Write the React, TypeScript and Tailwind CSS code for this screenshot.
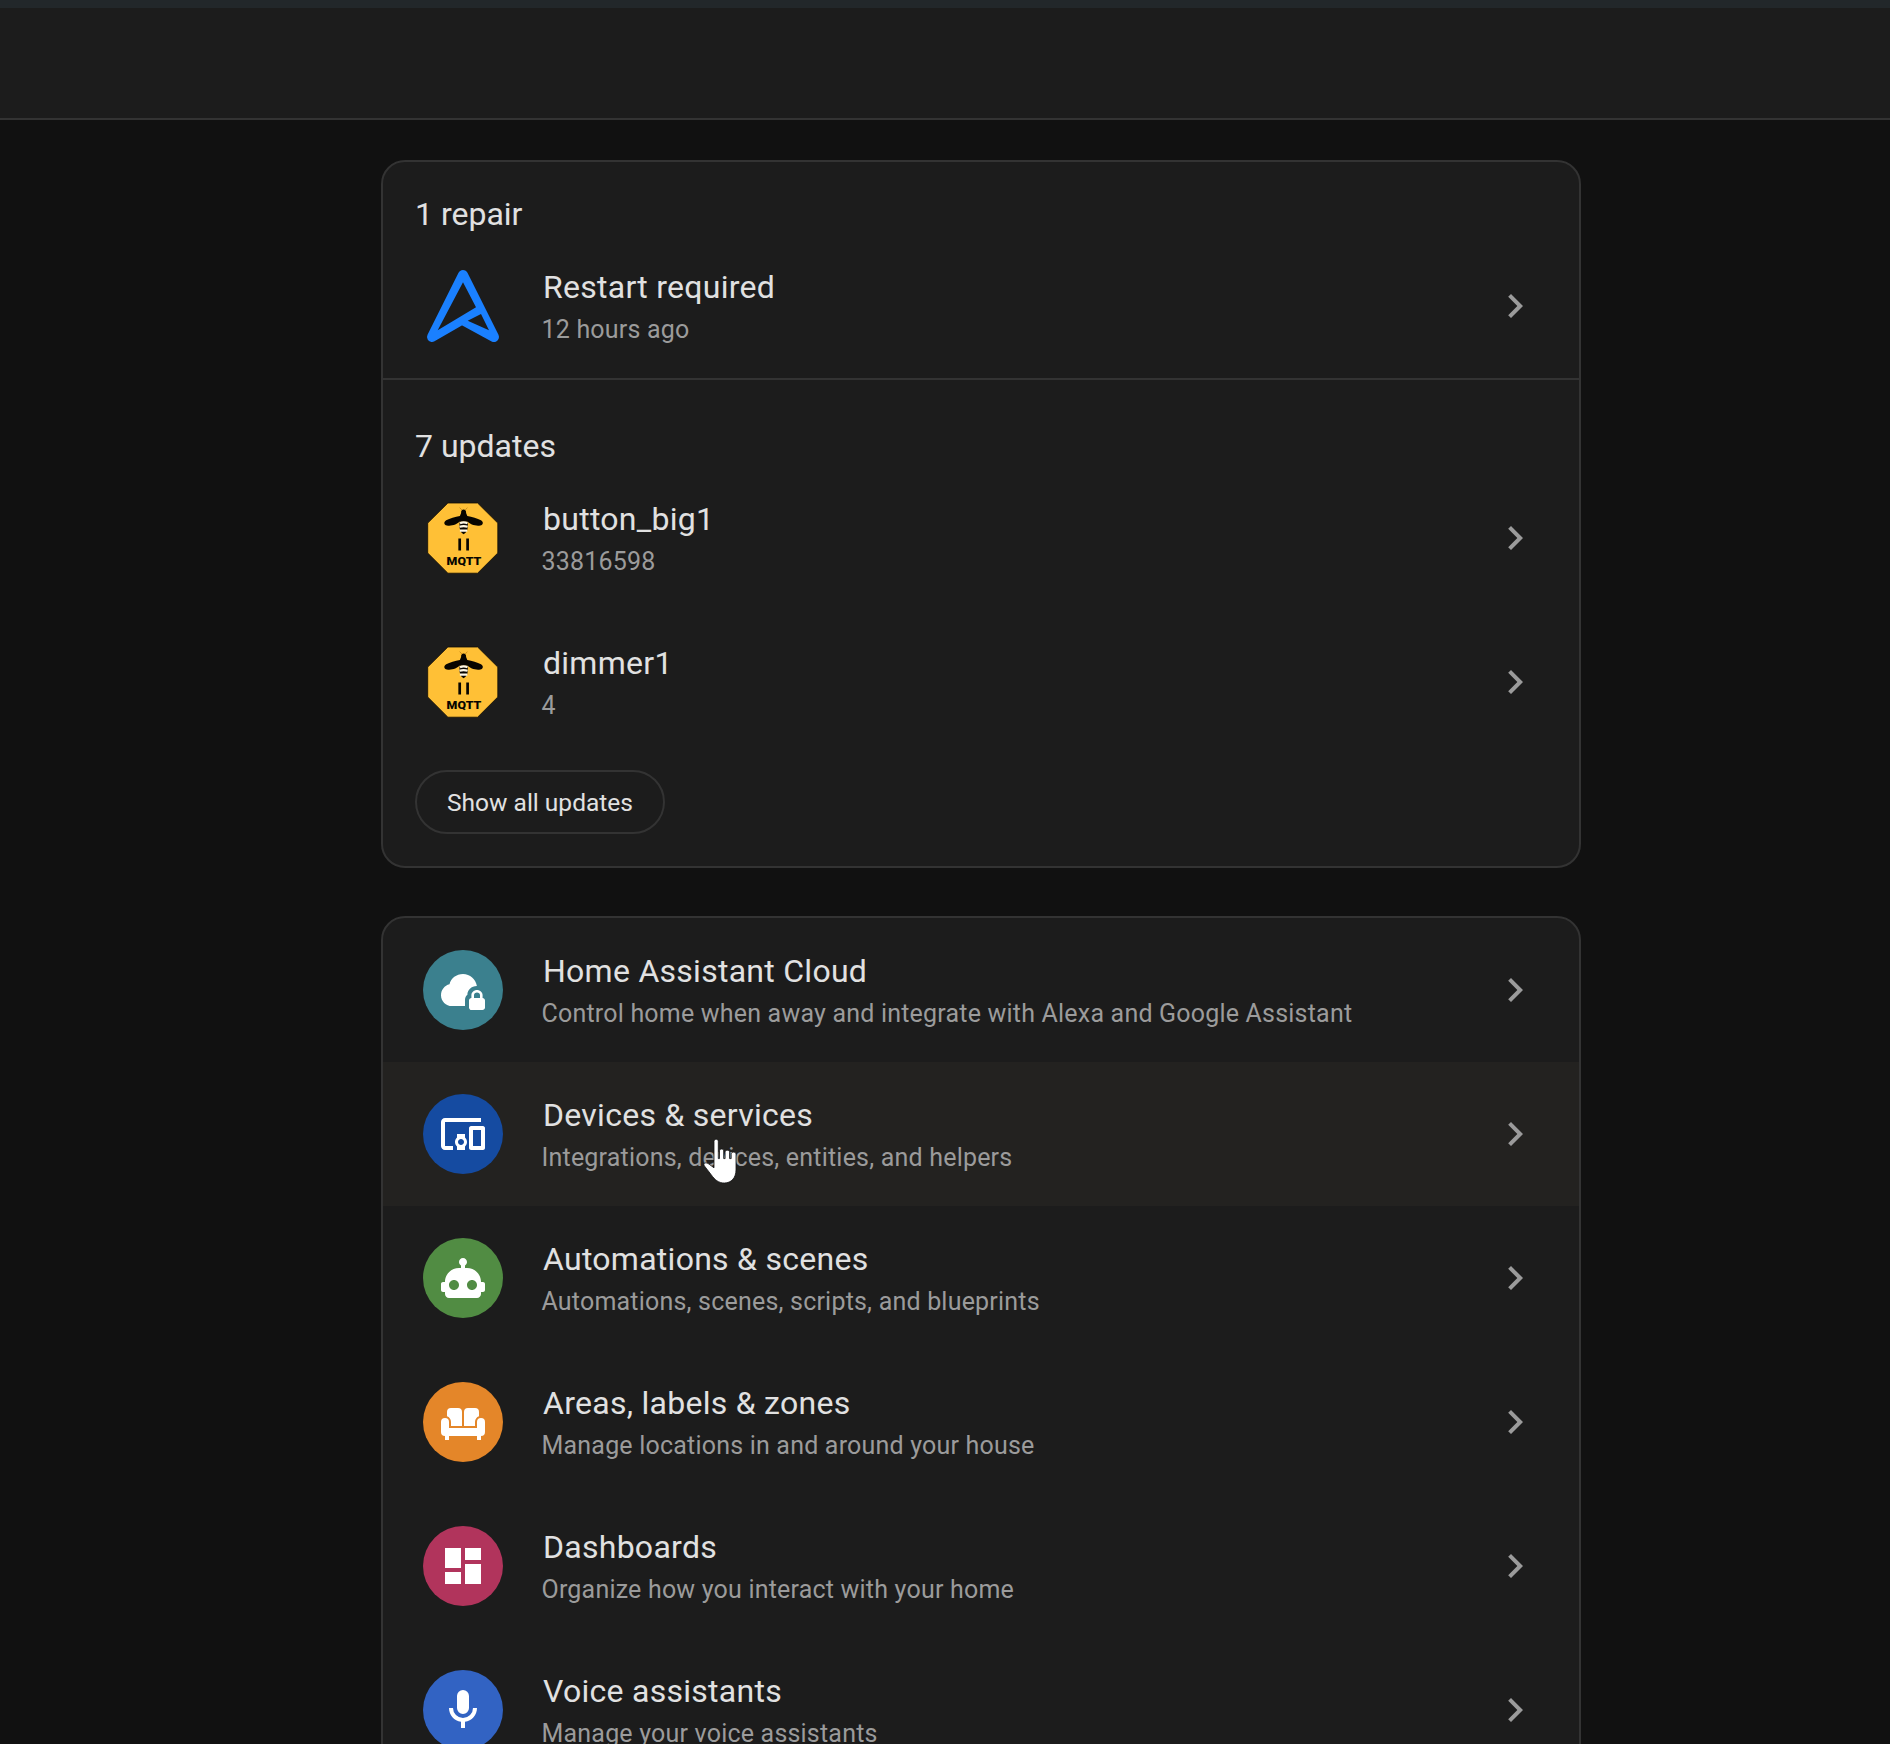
import type { ReactNode } from "react";

const ICONS = {
  chevron: "M8.59,16.58L13.17,12L8.59,7.41L10,6L16,12L10,18L8.59,16.58Z",
  cloudLock:
    "M6.5 20C3.46 20 1 17.6 1 14.58C1 11.95 2.8 9.75 5.25 9.15C6 6.1 8.7 4 12 4C15.5 4 18.4 6.6 18.95 10.03C16.1 10.05 14.2 12.1 14.2 14.4C13.4 15 13 15.9 13 17V20ZM23 17.3V20.8C23 21.4 22.4 22 21.7 22H16.2C15.6 22 15 21.4 15 20.7V17.2C15 16.6 15.6 16 16.2 16V14.5C16.2 13.1 17.6 12 19 12S21.8 13.1 21.8 14.5V16C22.4 16 23 16.6 23 17.3M20.5 14.5C20.5 13.7 19.8 13.2 19 13.2S17.5 13.7 17.5 14.5V16H20.5V14.5Z",
  devices:
    "M3 6H21V4H3C1.9 4 1 4.9 1 6V18C1 19.1 1.9 20 3 20H7V18H3V6M13 12H9V13.78C8.39 14.33 8 15.11 8 16C8 16.89 8.39 17.67 9 18.22V20H13V18.22C13.61 17.67 14 16.88 14 16S13.61 14.33 13 13.78V12M11 17.5C10.17 17.5 9.5 16.83 9.5 16S10.17 14.5 11 14.5 12.5 15.17 12.5 16 11.83 17.5 11 17.5M22 8H16C15.5 8 15 8.5 15 9V19C15 19.5 15.5 20 16 20H22C22.5 20 23 19.5 23 19V9C23 8.5 22.5 8 22 8M21 18H17V10H21V18Z",
  robot:
    "M22 14H21C21 10.13 17.87 7 14 7H13V5.73C13.6 5.39 14 4.74 14 4C14 2.9 13.11 2 12 2S10 2.9 10 4C10 4.74 10.4 5.39 11 5.73V7H10C6.13 7 3 10.13 3 14H2C1.45 14 1 14.45 1 15V18C1 18.55 1.45 19 2 19H3V20C3 21.11 3.9 22 5 22H19C20.11 22 21 21.11 21 20V19H22C22.55 19 23 18.55 23 18V15C23 14.45 22.55 14 22 14M7.5 18C6.12 18 5 16.88 5 15.5S6.12 13 7.5 13 10 14.12 10 15.5 8.88 18 7.5 18M16.5 18C15.12 18 14 16.88 14 15.5S15.12 13 16.5 13 19 14.12 19 15.5 17.88 18 16.5 18Z",
  sofa: "M6 5H9.5A2 2 0 0 1 11.5 7V14H6V12C6 10.6 5.2 9.5 4 9.1V7A2 2 0 0 1 6 5ZM14.5 5H18A2 2 0 0 1 20 7V9.1C18.8 9.5 18 10.6 18 12V14H12.5V7A2 2 0 0 1 14.5 5ZM3 10A2 2 0 0 1 5 12V15H19V12A2 2 0 0 1 23 12V17A2 2 0 0 1 21 19V21H19V19H5V21H3V19A2 2 0 0 1 1 17V12A2 2 0 0 1 3 10Z",
  dashboard: "M13,3V9H21V3M13,21H21V11H13M3,21H11V15H3M3,13H11V3H3V13Z",
  mic: "M12,2A3,3 0 0,1 15,5V11A3,3 0 0,1 12,14A3,3 0 0,1 9,11V5A3,3 0 0,1 12,2M19,11C19,14.53 16.39,17.44 13,17.93V21H11V17.93C7.61,17.44 5,14.53 5,11H7A5,5 0 0,0 12,16A5,5 0 0,0 17,11H19Z",
};

function Glyph({ d, className = "" }: { d: string; className?: string }) {
  return (
    <svg viewBox="0 0 24 24" className={`size-12 shrink-0 ${className}`} fill="currentColor">
      <path d={d} />
    </svg>
  );
}

function Circle({ d, color }: { d: string; color: string }) {
  return (
    <div className={`flex size-20 shrink-0 items-center justify-center rounded-full text-white ${color}`}>
      <Glyph d={d} />
    </div>
  );
}

function ArrowLogo() {
  return (
    <svg viewBox="0 0 80 80" className="size-20 shrink-0">
      <path
        d="M40 9L71 71L38.9 53.6L9 71Z"
        fill="#1a80ff"
        stroke="#1a80ff"
        strokeWidth="10"
        strokeLinejoin="round"
      />
      <path d="M40 16.3L53 41.3L14.7 64.3ZM44.7 54.7L58 48L66 64.3Z" fill="#1c1c1c" />
    </svg>
  );
}

function MqttLogo() {
  return (
    <svg viewBox="0 0 80 80" className="size-20 shrink-0">
      <path
        d="M24.9 5H54.6L74.8 25.1V55L54.6 75.2H24.9L4.7 55V25.1Z"
        fill="#ffc036"
        stroke="#120d02"
        strokeWidth="0.8"
      />
      <path d="M39.4 12.5L36.6 9.6M41.8 12.5L44.4 9.6" stroke="#c98a1a" strokeWidth="0.9" fill="none" />
      <path
        d="M40.6 11.5C42.3 11.5 43.3 12.8 43.1 15L44.3 18C49 18.6 54.5 20.4 58 22.3C60.8 24 60.3 27 57.3 27.6C52.5 28.5 46.8 26.3 44.4 23.6H36.8C34.3 26.3 28.7 28.5 23.9 27.6C20.8 27 20.4 24 23.2 22.3C26.7 20.4 32.2 18.6 36.9 18L38.1 15C37.9 12.8 38.9 11.5 40.6 11.5Z"
        fill="#080500"
      />
      <path d="M37 31.5H44.2C43.8 33.5 42.6 35.2 40.6 36.3C38.6 35.2 37.4 33.5 37 31.5Z" fill="#080500" />
      <path d="M36.8 23.6H44.6C45.2 27 44.9 30 43.9 33H37.4C36.4 30 36.2 27 36.8 23.6Z" fill="#080500" />
      <path
        d="M37 25.2Q40.6 23.6 44.5 25.2M36.6 28.8Q40.6 27.4 44.6 28.8M36.9 32.6H44.3"
        stroke="#fff8e5"
        strokeWidth="2.1"
        fill="none"
      />
      <path d="M36.7 40.6V52.4M44.6 40.6V52.4" stroke="#080500" strokeWidth="2.7" fill="none" />
      <text
        x="23.6"
        y="66.8"
        textLength="34.8"
        lengthAdjust="spacingAndGlyphs"
        fill="#080500"
        className="font-['Roboto'] text-[11px] font-black"
      >
        MQTT
      </text>
    </svg>
  );
}

function HandCursor() {
  return (
    <svg viewBox="0 0 36 48" className="absolute top-[76px] left-[320px] h-12 w-9">
      <path
        d="M13.2 1.2C14.5 1.2 15.3 2.2 15.3 3.5V20.6H16.5V13C16.5 10.4 20.7 10.4 20.7 13V20.6H22.1V14.2C22.1 11.6 26.6 11.6 26.6 14.2V20.6H28.2V16.2C28.2 13.4 33 13.4 33 16.2V32C33 39.5 28.5 45 21.3 45C15.5 45 11.6 41.6 8.2 36.7L1.4 27.9C-0.4 25.4 2.9 23.9 5.2 25.6L11 29.8V3.5C11 2.2 11.9 1.2 13.2 1.2Z"
        fill="#ffffff"
        stroke="#111111"
        strokeWidth="0.8"
      />
    </svg>
  );
}

type RowProps = { icon: ReactNode; title: string; sub: string; active?: boolean; children?: ReactNode };

function Row({ icon, title, sub, active, children }: RowProps) {
  return (
    <div
      className={`relative flex h-36 shrink-0 items-center pr-10 pl-10 ${active ? "bg-[#232220]" : ""}`}
    >
      {icon}
      <div className="ml-[38.5px] flex-1 pb-px whitespace-nowrap">
        <div className="ml-[1.5px] text-[32px] leading-[48px] tracking-[0.27px] text-[#e1e1e1]">{title}</div>
        <div className="mt-px text-[25px] leading-9 tracking-[0.2px] text-[#9b9b9b]">{sub}</div>
      </div>
      <Glyph d={ICONS.chevron} className="text-[#9b9b9b]" />
      {children}
    </div>
  );
}

export default function App() {
  return (
    <div className="flex h-[1744px] w-[1890px] flex-col overflow-hidden bg-[#111111] font-['Roboto',sans-serif]">
      <div className="h-2 shrink-0 bg-[#22272a]" />
      <header className="h-28 shrink-0 border-b-2 border-[#333333] bg-[#1c1c1c]" />
      <main className="ml-[381px] flex w-[1200px] flex-col gap-12 pt-10">
        <section className="shrink-0 rounded-3xl border-2 border-[#333333] bg-[#1c1c1c] pb-8">
          <div className="border-b-2 border-[#333333]">
            <h2 className="h-[72px] pt-7 pl-8 text-[32px] leading-[48px] text-[#e1e1e1]">1 repair</h2>
            <Row icon={<ArrowLogo />} title="Restart required" sub="12 hours ago" />
          </div>
          <h2 className="h-[86px] pt-[42px] pl-8 text-[32px] leading-[48px] text-[#e1e1e1]">7 updates</h2>
          <Row icon={<MqttLogo />} title="button_big1" sub="33816598" />
          <Row icon={<MqttLogo />} title="dimmer1" sub="4" />
          <button className="mt-4 ml-8 flex h-16 w-[250px] items-center justify-center rounded-full border-2 border-[#333333] pt-0.5 text-[24.5px] text-[#e1e1e1]">
            Show all updates
          </button>
        </section>
        <section className="shrink-0 overflow-hidden rounded-t-3xl border-2 border-[#333333] bg-[#1c1c1c]">
          <Row
            icon={<Circle d={ICONS.cloudLock} color="bg-[#3b808e]" />}
            title="Home Assistant Cloud"
            sub="Control home when away and integrate with Alexa and Google Assistant"
          />
          <Row
            active
            icon={<Circle d={ICONS.devices} color="bg-[#154ba1]" />}
            title="Devices & services"
            sub="Integrations, devices, entities, and helpers"
          >
            <HandCursor />
          </Row>
          <Row
            icon={<Circle d={ICONS.robot} color="bg-[#518c43]" />}
            title="Automations & scenes"
            sub="Automations, scenes, scripts, and blueprints"
          />
          <Row
            icon={<Circle d={ICONS.sofa} color="bg-[#e48629]" />}
            title="Areas, labels & zones"
            sub="Manage locations in and around your house"
          />
          <Row
            icon={<Circle d={ICONS.dashboard} color="bg-[#b1345c]" />}
            title="Dashboards"
            sub="Organize how you interact with your home"
          />
          <Row
            icon={<Circle d={ICONS.mic} color="bg-[#3263c3]" />}
            title="Voice assistants"
            sub="Manage your voice assistants"
          />
        </section>
      </main>
    </div>
  );
}
